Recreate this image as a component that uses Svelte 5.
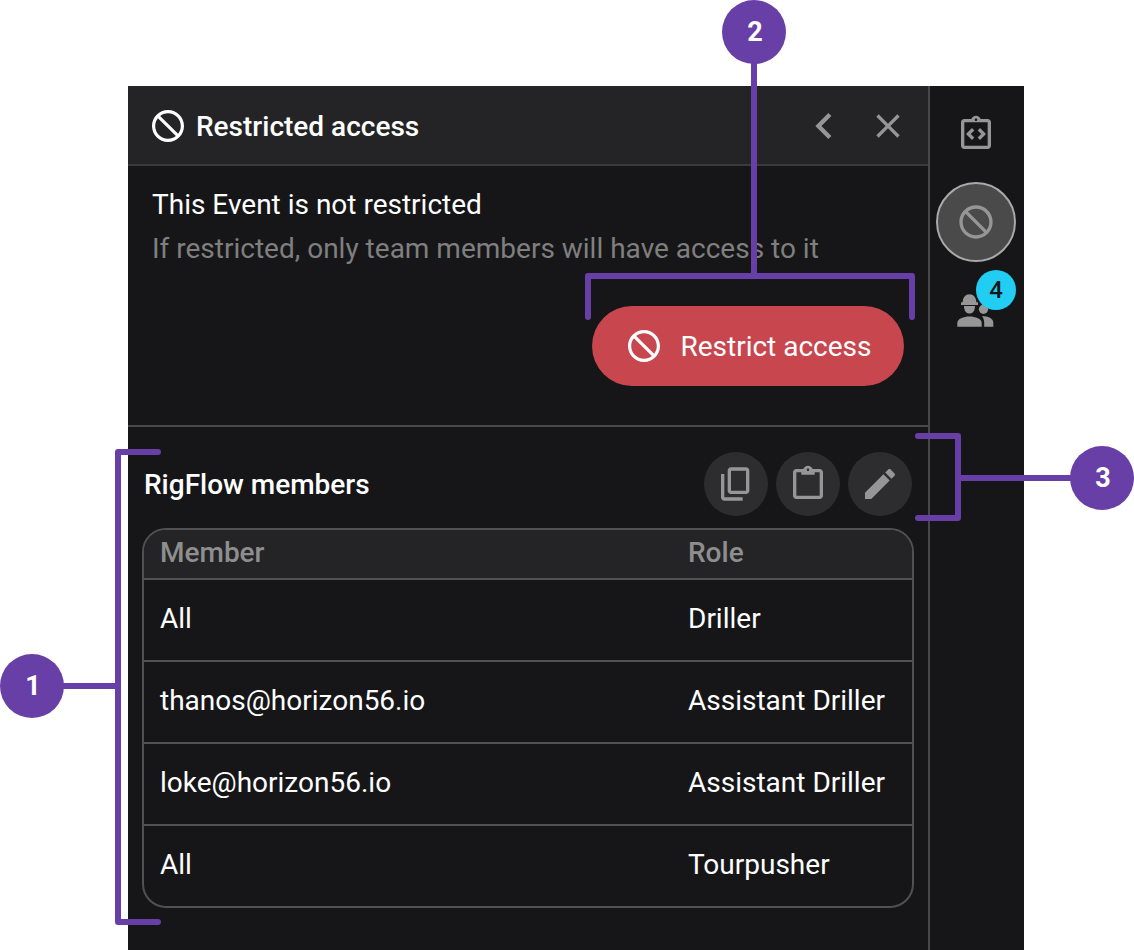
<script>
  const rows = [
    { member: 'All', role: 'Driller' },
    { member: 'thanos@horizon56.io', role: 'Assistant Driller' },
    { member: 'loke@horizon56.io', role: 'Assistant Driller' },
    { member: 'All', role: 'Tourpusher' }
  ];
  const blockPath = 'M12 2C6.48 2 2 6.48 2 12s4.48 10 10 10 10-4.48 10-10S17.52 2 12 2zM20 12c0 1.85-.63 3.55-1.69 4.9L7.1 5.69C8.45 4.63 10.15 4 12 4c4.42 0 8 3.58 8 8zM4 12c0-1.85.63-3.55 1.69-4.9L16.9 18.31C15.55 19.37 13.85 20 12 20c-4.42 0-8-3.58-8-8z';
</script>

<div class="page">
  <div class="panel">
    <main class="main">
      <header class="head">
        <svg class="block" viewBox="2 2 20 20"><path d={blockPath} /></svg>
        <h1>Restricted access</h1>
        <button class="plain back" aria-label="Back">
          <svg viewBox="0 0 24 24"><path d="M15.41 7.41L14 6l-6 6 6 6 1.41-1.41L10.83 12z" /></svg>
        </button>
        <button class="plain close" aria-label="Close">
          <svg viewBox="0 0 24 24"><path d="M19 6.41L17.59 5 12 10.59 6.41 5 5 6.41 10.59 12 5 17.59 6.41 19 12 13.41 17.59 19 19 17.59 13.41 12z" /></svg>
        </button>
      </header>

      <section class="status">
        <p class="line">This Event is not restricted</p>
        <p class="line muted">If restricted, only team members will have access to it</p>
        <div class="actions">
          <button class="restrict">
            <svg class="block" viewBox="2 2 20 20"><path d={blockPath} /></svg>
            <span>Restrict access</span>
          </button>
        </div>
      </section>

      <section class="members">
        <div class="members-head">
          <h2>RigFlow members</h2>
          <div class="tools">
            <button class="tool" aria-label="Copy">
              <svg viewBox="0 0 24 24"><path d="M9 18q-.825 0-1.412-.587Q7 16.825 7 16V4q0-.825.588-1.413Q8.175 2 9 2h9q.825 0 1.413.587Q20 3.175 20 4v12q0 .825-.587 1.413Q18.825 18 18 18Zm0-2h9V4H9v12Zm-4 6q-.825 0-1.412-.587Q3 20.825 3 20V6h2v14h11v2Z" /></svg>
            </button>
            <button class="tool" aria-label="Paste">
              <svg viewBox="0 0 24 24"><path fill-rule="evenodd" d="M19 3h-4.18C14.4 1.84 13.3 1 12 1s-2.4.84-2.82 2H5c-1.1 0-2 .9-2 2v14c0 1.1.9 2 2 2h14c1.1 0 2-.9 2-2V5c0-1.1-.9-2-2-2zM12 2.75c.41 0 .75.34.75.75s-.34.75-.75.75-.75-.34-.75-.75.34-.75.75-.75zM19 19H5V5h3v1.5h8V5h3z" /></svg>
            </button>
            <button class="tool" aria-label="Edit">
              <svg viewBox="0 0 24 24"><path d="M3 17.25V21h3.75L17.81 9.94l-3.75-3.75L3 17.25zM20.71 7.04c.39-.39.39-1.02 0-1.41l-2.34-2.34c-.39-.39-1.02-.39-1.41 0l-1.83 1.83 3.75 3.75 1.83-1.83z" /></svg>
            </button>
          </div>
        </div>

        <div class="table">
          <div class="row thead">
            <span>Member</span>
            <span>Role</span>
          </div>
          {#each rows as r}
            <div class="row">
              <span>{r.member}</span>
              <span>{r.role}</span>
            </div>
          {/each}
        </div>
      </section>
    </main>

    <aside class="side">
      <button class="side-btn" aria-label="Code">
        <svg viewBox="0 0 24 24"><path d="M19 3h-4.18C14.4 1.84 13.3 1 12 1s-2.4.84-2.82 2H5c-1.1 0-2 .9-2 2v14c0 1.1.9 2 2 2h14c1.1 0 2-.9 2-2V5c0-1.1-.9-2-2-2zm-7-.25c.41 0 .75.34.75.75s-.34.75-.75.75-.75-.34-.75-.75.34-.75.75-.75zM19 19H5V5h14v14zM11 14.17L8.83 12 11 9.83 9.59 8.41 6 12l3.59 3.59zM13 14.17l1.41 1.42L18 12l-3.59-3.59L13 9.83 15.17 12z" /></svg>
      </button>
      <button class="side-btn active" aria-label="Restricted access">
        <svg viewBox="0 0 24 24"><path d={blockPath} /></svg>
      </button>
      <button class="side-btn people" aria-label="Members">
        <svg viewBox="1 0 50 45">
          <path d="M12.7 17.3C12.7 12.7 15.5 9.3 19.5 9.3S26.3 12.7 26.3 17.3zM11 17.3H28V20H11z" />
          <path d="M14 21C14 25.5 16 28.6 19.5 28.6S25 25.5 25 21z" />
          <path d="M7.3 41.7V38C7.3 34 13.5 31.6 19.5 31.6S31.7 34 31.7 38V41.7z" />
          <circle cx="33.5" cy="24.3" r="4.6" />
          <path d="M32 31C38 31.2 43.3 33.6 43.3 37.5V41.7H34.2V38C34.2 35 33.5 33 32 31z" />
        </svg>
        <span class="badge">4</span>
      </button>
    </aside>
  </div>

  <svg class="callouts" viewBox="0 0 1134 950">
    <path d="M158 452H118V922H158M64 686H118" />
    <path d="M754 64V276M588 317V276H912V317" />
    <path d="M918 436H958V518H918M958 478H1070" />
    <circle cx="32" cy="686" r="32" />
    <circle cx="754" cy="32" r="32" />
    <circle cx="1102" cy="478" r="32" />
  </svg>
  <span class="num n1">1</span>
  <span class="num n2">2</span>
  <span class="num n3">3</span>
</div>

<style>
  :global(body) {
    margin: 0;
    background: #fff;
  }
  .page {
    position: relative;
    box-sizing: border-box;
    width: 1134px;
    height: 950px;
    padding: 86px 110px 0 128px;
    overflow: hidden;
    font-family: Roboto, "Liberation Sans", sans-serif;
    font-size: 28px;
    color: #fff;
  }
  button {
    border: 0;
    padding: 0;
    margin: 0;
    background: none;
    font: inherit;
    color: inherit;
    display: flex;
    align-items: center;
    justify-content: center;
  }
  svg {
    display: block;
    fill: currentColor;
  }
  .panel {
    display: flex;
    height: 864px;
    background: #161618;
  }
  .main {
    width: 800px;
    flex: none;
  }
  .side {
    box-sizing: border-box;
    flex: 1;
    border-left: 2px solid #484849;
    padding-right: 2px;
    display: flex;
    flex-direction: column;
    align-items: center;
    color: #969696;
  }
  .head {
    box-sizing: border-box;
    height: 80px;
    display: flex;
    align-items: center;
    padding: 2px 20px 0 24px;
    background: #242426;
    border-bottom: 2px solid #3a3a3c;
  }
  .block {
    width: 32px;
    height: 32px;
    flex: none;
  }
  h1 {
    margin: 0 0 0 12px;
    padding-top: 2px;
    flex: 1;
    font-size: 28px;
    font-weight: 500;
    line-height: 40px;
  }
  .plain {
    color: #969696;
  }
  .plain svg {
    width: 100%;
    height: 100%;
  }
  .back {
    width: 52px;
    height: 52px;
    margin-right: 18px;
  }
  .close {
    width: 40px;
    height: 40px;
  }
  .status {
    box-sizing: border-box;
    height: 261px;
    padding: 17px 24px 0;
    border-bottom: 2px solid #484849;
  }
  .line {
    margin: 0;
    height: 44px;
    line-height: 44px;
  }
  .muted {
    color: #7f7f7f;
  }
  .actions {
    display: flex;
    justify-content: flex-end;
    margin-top: 35px;
  }
  .restrict {
    box-sizing: border-box;
    width: 312px;
    height: 80px;
    padding-left: 4px;
    border-radius: 40px;
    background: #c8474f;
    gap: 20px;
  }
  .members {
    padding: 25px 14px 0;
  }
  .members-head {
    height: 64px;
    display: flex;
    align-items: center;
    justify-content: space-between;
    margin-bottom: 12px;
    padding-left: 2px;
    padding-right: 2px;
  }
  h2 {
    margin: 0;
    font-size: 28px;
    font-weight: 500;
  }
  .tools {
    display: flex;
    gap: 8px;
  }
  .tool {
    width: 64px;
    height: 64px;
    border-radius: 50%;
    background: #2d2d2f;
    color: #969696;
  }
  .tool svg {
    width: 40px;
    height: 40px;
  }
  .table {
    box-sizing: border-box;
    width: 772px;
    border: 2px solid #515153;
    border-radius: 24px;
    overflow: hidden;
  }
  .row {
    display: grid;
    grid-template-columns: 528px 1fr;
    align-items: center;
    box-sizing: content-box;
    height: 76px;
    padding: 0 0 4px 16px;
    border-bottom: 2px solid #515153;
  }
  .row:last-child {
    border-bottom: 0;
  }
  .thead {
    height: 44px;
    background: #242426;
    color: #8e8e8e;
    font-weight: 500;
  }
  .side-btn {
    position: relative;
    width: 80px;
    height: 80px;
    flex: none;
  }
  .side-btn svg {
    width: 40px;
    height: 40px;
  }
  .side-btn:first-child {
    margin-top: 8px;
    margin-bottom: 8px;
  }
  .active {
    box-sizing: border-box;
    border-radius: 50%;
    background: #4a4a4b;
    border: 2px solid #a9a9a9;
  }
  .people {
    height: 45px;
    margin-top: 23px;
  }
  .side-btn.people svg {
    width: 50px;
    height: 45px;
  }
  .badge {
    position: absolute;
    left: 40px;
    top: -15px;
    width: 40px;
    height: 40px;
    border-radius: 50%;
    background: #22cdf4;
    color: #161618;
    font-size: 24px;
    font-weight: 500;
    line-height: 40px;
    text-align: center;
  }
  .callouts {
    position: absolute;
    left: 0;
    top: 0;
    width: 1134px;
    height: 950px;
    pointer-events: none;
    fill: #683fa6;
  }
  .callouts path {
    fill: none;
    stroke: #683fa6;
    stroke-width: 6;
    stroke-linecap: round;
    stroke-linejoin: round;
  }
  .num {
    position: absolute;
    width: 64px;
    height: 64px;
    line-height: 64px;
    text-align: center;
    font-size: 27px;
    font-weight: 700;
  }
  .n1 { left: 1px; top: 654px; }
  .n2 { left: 723px; top: 0; }
  .n3 { left: 1071px; top: 446px; }
</style>
